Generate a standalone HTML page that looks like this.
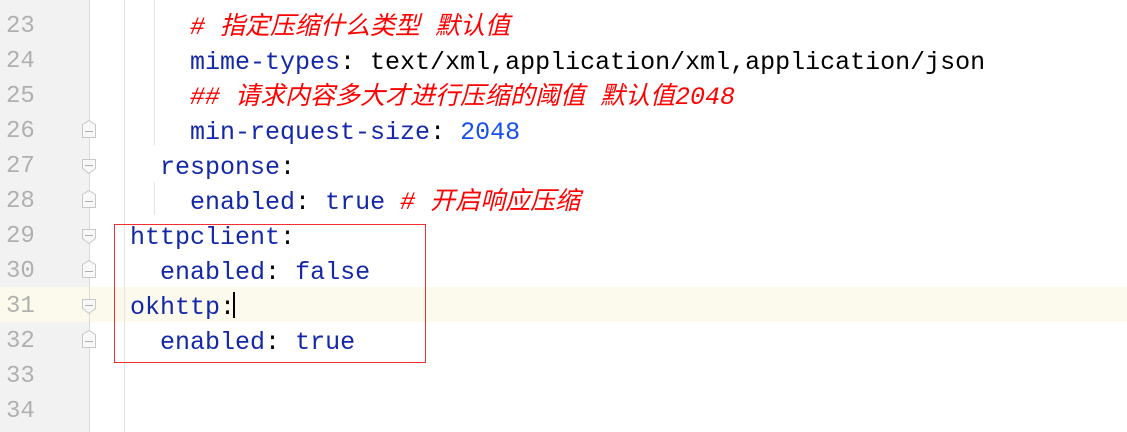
<!DOCTYPE html>
<html><head><meta charset="utf-8"><style>
html,body{margin:0;padding:0;width:1127px;height:432px;overflow:hidden;background:#fff;}
.g{position:absolute;left:0;top:0;width:89px;height:432px;background:#f2f2f2;border-right:1px solid #dcdcdc;}
.hl{position:absolute;left:0;top:287px;width:1127px;height:35px;background:#fcfaed;}
.ln{position:absolute;left:6px;font:24px "Liberation Mono",monospace;color:#b0b0b0;line-height:35px;}
.c{position:absolute;left:130px;font:25px "Liberation Mono","Noto Sans CJK SC",monospace;line-height:35px;white-space:pre;color:#000;}
.k{color:#1428a8}.n{color:#1750eb}.cm{color:#f00;font-style:italic}
.ig{position:absolute;width:1px;background:#e4e4e4;}
.box{position:absolute;left:114px;top:224px;width:310px;height:137px;border:1px solid #f03030;}
.cur{position:absolute;left:233px;top:292px;width:2px;height:26px;background:#000;}
</style></head><body>
<div class="hl"></div>
<div class="g"></div>
<div class="hl" style="width:89px;background:#fcfaed"></div>
<div class="ig" style="left:124px;top:0;height:432px"></div>
<div class="ig" style="left:154px;top:0;height:145px"></div>
<div class="ig" style="left:154px;top:182px;height:33px"></div>
<div class="ln" style="top:9px">23</div>
<div class="ln" style="top:44px">24</div>
<div class="ln" style="top:79px">25</div>
<div class="ln" style="top:114px">26</div>
<div class="ln" style="top:149px">27</div>
<div class="ln" style="top:184px">28</div>
<div class="ln" style="top:219px">29</div>
<div class="ln" style="top:254px">30</div>
<div class="ln" style="top:289px">31</div>
<div class="ln" style="top:324px">32</div>
<div class="ln" style="top:359px">33</div>
<div class="ln" style="top:394px">34</div>
<svg style="position:absolute;left:0;top:0" width="100" height="432">
<g fill="#f8f8f8" stroke="#c8c8c8">
<path d="M82.5,124.5 L89,120.5 L95.5,124.5 V137.5 H82.5 Z"/>
<path d="M82.5,159.5 H95.5 V168.5 L89,173.5 L82.5,168.5 Z"/>
<path d="M82.5,194.5 L89,190.5 L95.5,194.5 V207.5 H82.5 Z"/>
<path d="M82.5,229.5 H95.5 V238.5 L89,243.5 L82.5,238.5 Z"/>
<path d="M82.5,264.5 L89,260.5 L95.5,264.5 V277.5 H82.5 Z"/>
<path d="M82.5,299.5 H95.5 V308.5 L89,313.5 L82.5,308.5 Z"/>
<path d="M82.5,334.5 L89,330.5 L95.5,334.5 V347.5 H82.5 Z"/>
</g>
<g stroke="#b0b0b0"><path d="M85,131.5H93M85,165.5H93M85,201.5H93M85,235.5H93M85,271.5H93M85,305.5H93M85,341.5H93"/></g>
</svg>
<div class="c" style="top:10px">    <span class="cm"># 指定压缩什么类型 默认值</span></div>
<div class="c" style="top:45px">    <span class="k">mime-types</span>: text/xml,application/xml,application/json</div>
<div class="c" style="top:80px">    <span class="cm">## 请求内容多大才进行压缩的阈值 默认值2048</span></div>
<div class="c" style="top:115px">    <span class="k">min-request-size</span>: <span class="n">2048</span></div>
<div class="c" style="top:150px">  <span class="k">response</span>:</div>
<div class="c" style="top:185px">    <span class="k">enabled</span>: <span class="k">true</span> <span class="cm"># 开启响应压缩</span></div>
<div class="c" style="top:220px"><span class="k">httpclient</span>:</div>
<div class="c" style="top:255px">  <span class="k">enabled</span>: <span class="k">false</span></div>
<div class="c" style="top:290px"><span class="k">okhttp</span>:</div>
<div class="c" style="top:325px">  <span class="k">enabled</span>: <span class="k">true</span></div>
<div class="cur"></div>
<div class="box"></div>
</body></html>
